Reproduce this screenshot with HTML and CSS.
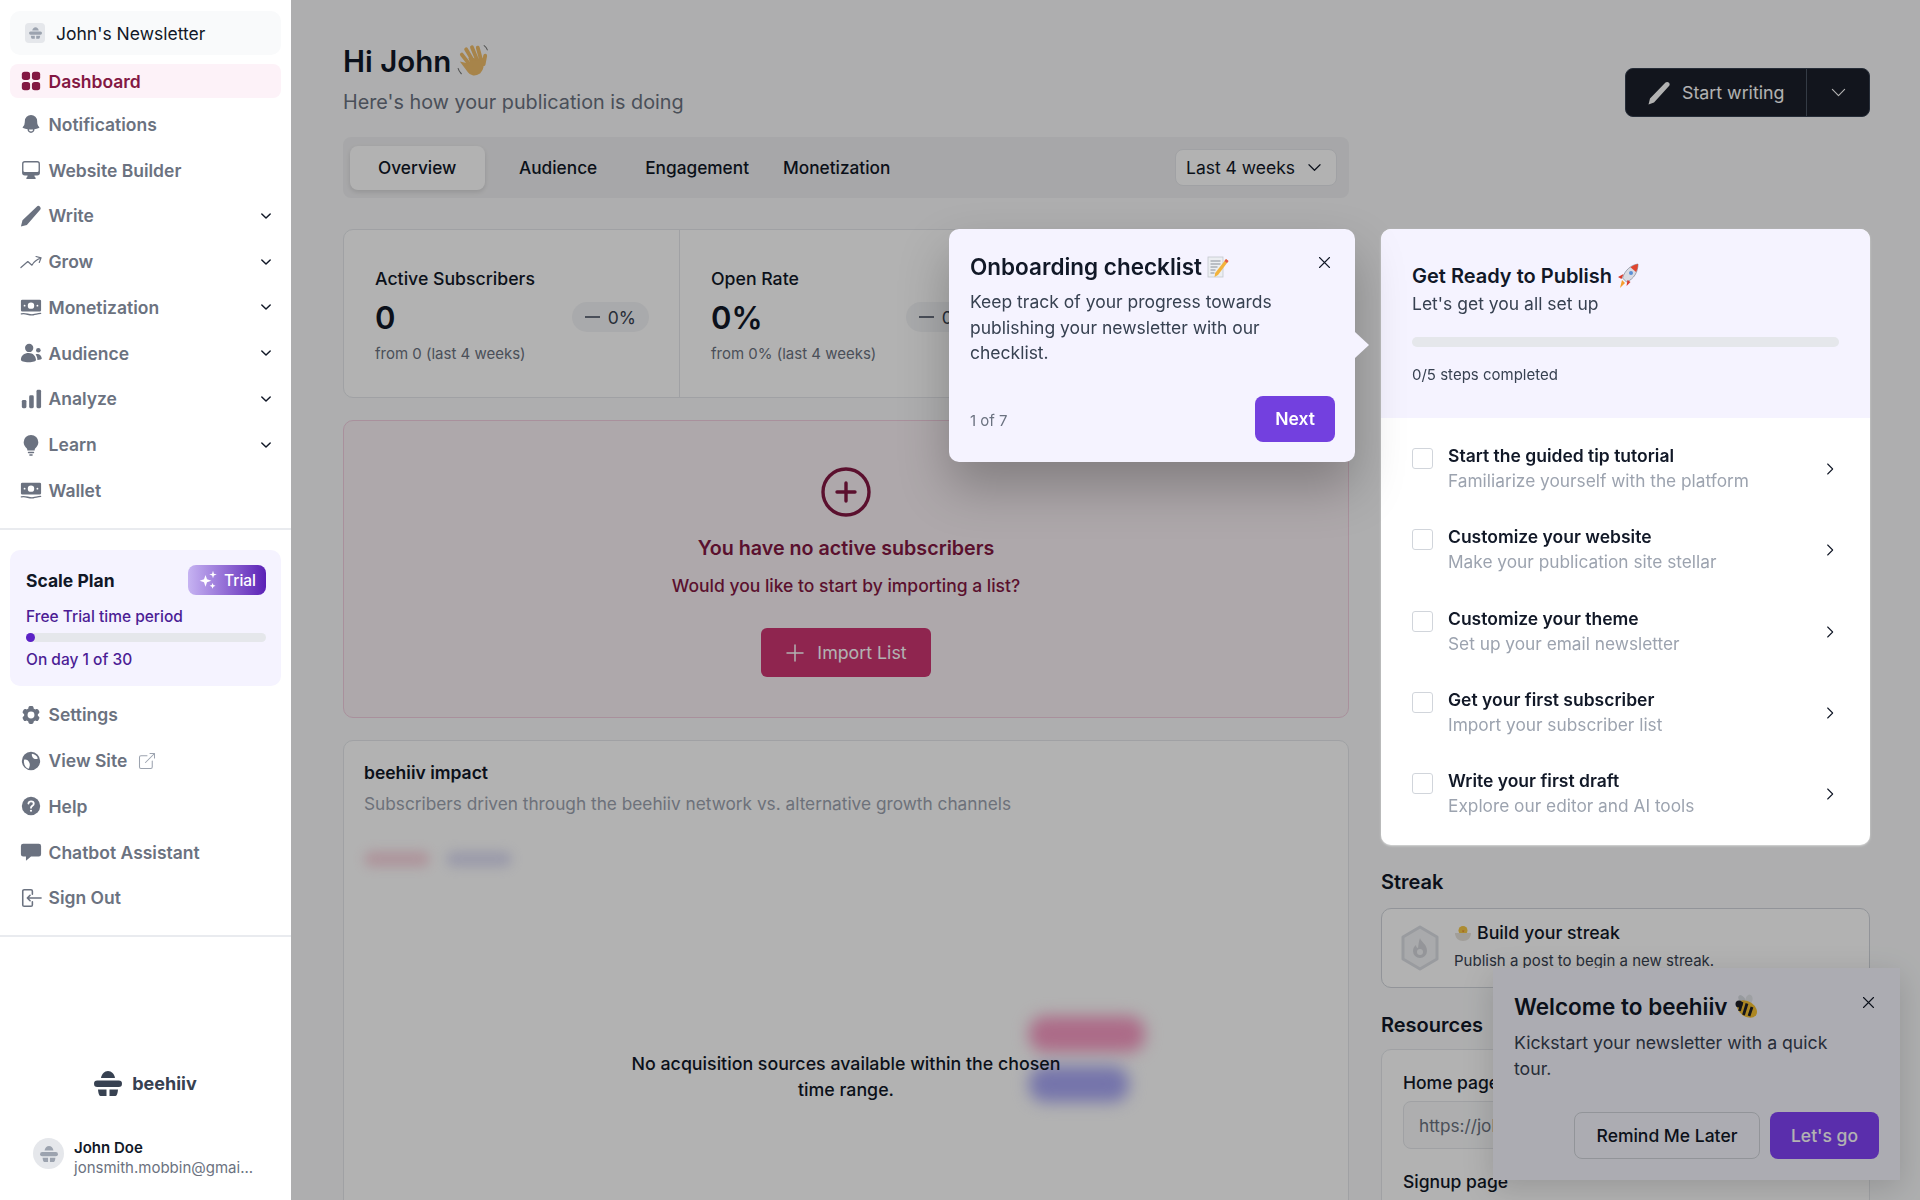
FILE: index.html
```html
<!DOCTYPE html>
<html lang="en">
<head>
    <meta charset="UTF-8">
    <meta name="viewport" content="width=device-width, initial-scale=1.0">
    <title>beehiiv Dashboard</title>
    <link rel="stylesheet" href="styles.css">
</head>
<body>
    <svg class="sprite" xmlns="http://www.w3.org/2000/svg">
        <symbol id="chevron" viewBox="0 0 24 24"><path d="M5 8.5l7 7 7-7" fill="none" stroke="currentColor" stroke-linecap="round" stroke-linejoin="round"/></symbol>
        <symbol id="chevron-right" viewBox="0 0 24 24"><path d="M8.5 4.5L16 12l-7.5 7.5" fill="none" stroke="currentColor" stroke-width="1.6" stroke-linecap="round" stroke-linejoin="round"/></symbol>
        <symbol id="close" viewBox="0 0 24 24"><path d="M4 4l16 16M20 4L4 20" fill="none" stroke="currentColor" stroke-width="1.7" stroke-linecap="round"/></symbol>
        <symbol id="money" viewBox="0 0 24 24"><path fill-rule="evenodd" d="M2.5 4h19A1.5 1.5 0 0123 5.500v10a1.500 1.500 0 01-1.500 1.500h-19A1.500 1.500 0 011 15.500v-10A1.500 1.500 0 012.500 4zM12 7a3.500 3.500 0 100 7 3.500 3.500 0 000-7zM5 9.500a1 1 0 100 2 1 1 0 000-2zm14 0a1 1 0 100 2 1 1 0 000-2z"/><path d="M1.500 19.500c5-1.300 8 1.800 13 1 3-.5 5-1.200 8-1.500" fill="none" stroke="currentColor" stroke-width="1.500" stroke-linecap="round"/></symbol>
        <symbol id="logo" viewBox="0 0 28 25"><path d="M7 7c.6-4 3.500-7 7-7s6.400 3 7 7z"/><rect y="9.500" width="28" height="6.500" rx="3.250"/><path d="M4 18.500h8.500V25H6.500C5 25 4.300 22 4 18.500zM15.500 18.500H24C23.700 22 23 25 21.500 25h-6z"/></symbol>
    </svg>

    <aside class="sidebar">
        <div class="sidebar-top">
            <div class="publication">
                <span class="publication-icon"><svg width="13" height="12"><use href="#logo"/></svg></span>
                John's Newsletter
            </div>
            <a class="nav-item nav-active">
                <svg class="nav-icon" viewBox="0 0 24 24" fill="currentColor"><rect x="2" y="2" width="9" height="9" rx="3"/><rect x="13" y="2" width="9" height="9" rx="3"/><rect x="2" y="13" width="9" height="9" rx="3"/><rect x="13" y="13" width="9" height="9" rx="3"/></svg>
                Dashboard
            </a>
            <a class="nav-item">
                <svg class="nav-icon" viewBox="0 0 24 24" fill="currentColor"><path fill-rule="evenodd" clip-rule="evenodd" d="M5.250 9a6.750 6.750 0 0113.500 0v.75c0 2.123.8 4.057 2.118 5.520a.75.75 0 01-.297 1.206c-1.544.57-3.160.99-4.831 1.243a3.750 3.750 0 11-7.480 0 24.585 24.585 0 01-4.831-1.244.75.75 0 01-.298-1.205A8.217 8.217 0 005.250 9.750V9zm4.502 8.900a2.250 2.250 0 104.496 0 25.057 25.057 0 01-4.496 0z"/></svg>
                Notifications
            </a>
            <a class="nav-item">
                <svg class="nav-icon" viewBox="0 0 24 24" fill="currentColor"><path fill-rule="evenodd" clip-rule="evenodd" d="M2.250 5.250a3 3 0 013-3h13.500a3 3 0 013 3V15a3 3 0 01-3 3h-3v.257c0 .597.237 1.170.659 1.591l.621.622a.75.75 0 01-.53 1.280h-9a.75.75 0 01-.53-1.280l.621-.622a2.250 2.250 0 00.659-1.590V18h-3a3 3 0 01-3-3V5.250zm1.500 0v7.500a1.500 1.500 0 001.500 1.500h13.500a1.500 1.500 0 001.500-1.500v-7.500a1.500 1.500 0 00-1.500-1.500H5.250a1.500 1.500 0 00-1.500 1.500z"/></svg>
                Website Builder
            </a>
            <a class="nav-item">
                <svg class="nav-icon" viewBox="0 0 24 24" fill="currentColor"><path d="M1 23.500l1.700-6.800L18.500 1.500c1-1 2.500-.6 3.300.3.8.9 1.200 2.400.2 3.400L7.500 21.700z"/></svg>
                Write
                <svg class="nav-chevron" stroke-width="2.4"><use href="#chevron"/></svg>
            </a>
            <a class="nav-item">
                <svg class="nav-icon" viewBox="0 0 24 24" fill="none" stroke="currentColor" stroke-width="1.300" stroke-linecap="round" stroke-linejoin="round"><path d="M1 18l7.500-6.500 4.500 4c1.800-3.500 5-6.200 10-8m0 0l-5.500-1.500M23 7.500l-2 5"/></svg>
                Grow
                <svg class="nav-chevron" stroke-width="2.4"><use href="#chevron"/></svg>
            </a>
            <a class="nav-item">
                <svg class="nav-icon" fill="currentColor"><use href="#money"/></svg>
                Monetization
                <svg class="nav-chevron" stroke-width="2.4"><use href="#chevron"/></svg>
            </a>
            <a class="nav-item">
                <svg class="nav-icon" viewBox="0 0 24 24" fill="currentColor"><circle cx="10" cy="6.500" r="4.500"/><circle cx="20" cy="9" r="2.500"/><path d="M1 19.500c0-5 3.800-7.500 8.500-7.500s7.500 3 8 7.500c0 1-3 2.500-8 2.500s-8.500-1.500-8.500-2.500zM19 19.500c0-2.500-.8-4.500-2-6 3-1.500 6.500.5 6.800 4.500 0 .8-2 1.500-4.800 1.500z"/></svg>
                Audience
                <svg class="nav-chevron" stroke-width="2.4"><use href="#chevron"/></svg>
            </a>
            <a class="nav-item">
                <svg class="nav-icon" viewBox="0 0 24 24" fill="currentColor"><rect x="2" y="13" width="5" height="9" rx="1.500"/><rect x="10" y="8" width="5" height="14" rx="1.500"/><rect x="18" y="2" width="5" height="20" rx="1.500"/></svg>
                Analyze
                <svg class="nav-chevron" stroke-width="2.4"><use href="#chevron"/></svg>
            </a>
            <a class="nav-item">
                <svg class="nav-icon" viewBox="0 0 24 24" fill="currentColor"><path d="M12 1a8 8 0 00-8 8c0 3 1.700 5 3.500 6.800.5.700.5 1.500.5 2.200h8c0-.7 0-1.500.5-2.200C18.300 14 20 12 20 9a8 8 0 00-8-8z"/><rect x="8.500" y="19.300" width="7" height="1.700" rx=".8"/><rect x="10" y="22" width="4" height="1.700" rx=".8"/></svg>
                Learn
                <svg class="nav-chevron" stroke-width="2.4"><use href="#chevron"/></svg>
            </a>
            <a class="nav-item">
                <svg class="nav-icon" fill="currentColor"><use href="#money"/></svg>
                Wallet
            </a>
        </div>

        <div class="plan-card">
            <div class="plan-head">
                <span class="plan-name">Scale Plan</span>
                <span class="trial-badge">
                    <svg width="20" height="20" viewBox="0 0 24 24" fill="currentColor"><path d="M9 6l1.800 5.200L16 13l-5.200 1.800L9 20l-1.800-5.200L2 13l5.200-1.800zM18 1l1.100 3.400L22.500 5.500l-3.400 1.100L18 10l-1.100-3.400L13.500 5.500l3.400-1.100zM17.500 15.500l1 2.500 2.500 1-2.500 1-1 2.500-1-2.500-2.500-1 2.500-1z"/></svg>
                    Trial
                </span>
            </div>
            <div class="plan-text">Free Trial time period</div>
            <div class="plan-track"><div class="plan-fill"></div></div>
            <div class="plan-text">On day 1 of 30</div>
        </div>

        <div class="sidebar-links">
            <a class="nav-item">
                <svg class="nav-icon" viewBox="0 0 24 24" fill="currentColor"><path fill-rule="evenodd" clip-rule="evenodd" d="M11.078 2.250c-.917 0-1.699.663-1.850 1.567L9.050 4.889c-.02.12-.115.26-.297.348a7.493 7.493 0 00-.986.57c-.166.115-.334.126-.45.083L6.300 5.508a1.875 1.875 0 00-2.282.819l-.922 1.597a1.875 1.875 0 00.432 2.385l.84.692c.095.078.17.229.154.43a7.598 7.598 0 000 1.139c.015.2-.059.352-.153.43l-.841.692a1.875 1.875 0 00-.432 2.385l.922 1.597a1.875 1.875 0 002.282.818l1.019-.382c.115-.043.283-.031.45.082.312.214.641.405.985.57.182.088.277.228.297.35l.178 1.071c.151.904.933 1.567 1.850 1.567h1.844c.916 0 1.699-.663 1.850-1.567l.178-1.072c.02-.12.114-.26.297-.349.344-.165.673-.356.985-.57.167-.114.335-.125.45-.082l1.020.382a1.875 1.875 0 002.280-.819l.923-1.597a1.875 1.875 0 00-.432-2.385l-.84-.692c-.095-.078-.17-.229-.154-.43a7.614 7.614 0 000-1.139c-.016-.2.059-.352.153-.43l.84-.692c.708-.582.891-1.590.433-2.385l-.922-1.597a1.875 1.875 0 00-2.282-.818l-1.020.382c-.114.043-.282.031-.449-.083a7.490 7.490 0 00-.985-.57c-.183-.087-.277-.227-.297-.348l-.179-1.072a1.875 1.875 0 00-1.850-1.567h-1.843zM12 15.750a3.750 3.750 0 100-7.500 3.750 3.750 0 000 7.500z"/></svg>
                Settings
            </a>
            <a class="nav-item">
                <svg class="nav-icon" viewBox="0 0 24 24" fill="currentColor"><path fill-rule="evenodd" clip-rule="evenodd" d="M12 2a10 10 0 100 20 10 10 0 000-20zm-7.500 8.500c2.500-.5 4 .5 5 2 1 1.500 1.500 3 1 5-.3 1.200-.5 2-1 3C6 19.500 3.500 15.500 4.500 10.500zM13 4.200c3 .3 5.500 2.300 6.500 5-1.500 1-3 1-4.500 0-1.500-1-2.500-3-2-5z"/></svg>
                View Site
                <svg class="external-icon" viewBox="0 0 24 24" fill="none" stroke="currentColor" stroke-width="1.400" stroke-linecap="round" stroke-linejoin="round"><path d="M12 5H4a2 2 0 00-2 2v13a2 2 0 002 2h13a2 2 0 002-2v-8M10 14L22 2m0 0h-6m6 0v6"/></svg>
            </a>
            <a class="nav-item">
                <svg class="nav-icon" viewBox="0 0 24 24"><circle cx="12" cy="12" r="10" fill="currentColor"/><path d="M9.200 9.300c.3-1.500 1.400-2.300 2.900-2.300 1.600 0 2.900 1 2.900 2.500 0 2.300-3 2.300-3 4.500" fill="none" stroke="#fff" stroke-width="2" stroke-linecap="round"/><circle cx="12" cy="17.200" r="1.200" fill="#fff"/></svg>
                Help
            </a>
            <a class="nav-item">
                <svg class="nav-icon" viewBox="0 0 24 24" fill="currentColor"><path d="M3.500 3h17A2.500 2.500 0 0123 5.500v9a2.500 2.500 0 01-2.500 2.500H12l-5.500 4.500V17h-3A2.500 2.500 0 011 14.500v-9A2.500 2.500 0 013.500 3z"/></svg>
                Chatbot Assistant
            </a>
            <a class="nav-item">
                <svg class="nav-icon" viewBox="0 0 24 24" fill="none" stroke="currentColor" stroke-width="1.700" stroke-linecap="round" stroke-linejoin="round"><path d="M13.500 8V4.500a1.500 1.500 0 00-1.500-1.500H4.500A1.500 1.500 0 003 4.500v15A1.500 1.500 0 004.500 21H12a1.500 1.500 0 001.500-1.500V16M11 15l-3-3m0 0l3-3m-3 3h15"/></svg>
                Sign Out
            </a>
        </div>

        <div class="sidebar-footer">
            <div class="brand">
                <svg width="28" height="25" fill="#374151"><use href="#logo"/></svg>
                beehiiv
            </div>
            <div class="account">
                <span class="account-avatar"><svg width="18" height="16"><use href="#logo"/></svg></span>
                <div class="account-text">
                    <div class="account-name">John Doe</div>
                    <div class="account-email">jonsmith.mobbin@gmai...</div>
                </div>
            </div>
        </div>
    </aside>

    <main class="main">
        <div class="page-head">
            <div>
                <h1>Hi John
                    <svg class="emoji-hand" width="34" height="34" viewBox="0 0 32 32" fill="none" stroke="#f0bd6a" stroke-width="3.6" stroke-linecap="round"><path d="M9.500 5l6 10M15 3l4.500 11M20.500 3.500l3 11M5.500 10l7 9M27.500 11l-1.500 8" /><path d="M13 14l11 1c2 5 1 9-2 12-4 2.500-8 2-10-1l-6-8 9 2z" fill="#f0bd6a" stroke-width="2"/><path d="M2 23c.5 2 1.500 3.500 3 5M26.500 1.500c1.500 1 2.500 2.500 3 4" stroke="#777" stroke-width="1"/></svg>
                </h1>
                <p class="page-sub">Here's how your publication is doing</p>
            </div>
            <div class="write-btn">
                <span class="write-main">
                    <svg width="24" height="24" viewBox="0 0 24 24" fill="currentColor"><path d="M1.500 23.500l1.500-6L18.500 1.500c1-1 2.800-.7 3.500.2.800.9 1 2.400 0 3.400L7 21.500z"/></svg>
                    Start writing
                </span>
                <span class="write-caret"><svg width="21" height="21" stroke-width="1.300"><use href="#chevron"/></svg></span>
            </div>
        </div>

        <div class="tabs">
            <span class="tab tab-active">Overview</span>
            <span class="tab">Audience</span>
            <span class="tab tab-compact">Engagement</span>
            <span class="tab tab-compact">Monetization</span>
            <span class="range-select">Last 4 weeks <svg width="19" height="19" stroke-width="1.500"><use href="#chevron"/></svg></span>
        </div>

        <div class="columns">
            <div class="col-left">
                <div class="stats">
                    <div class="stat">
                        <div class="stat-label">Active Subscribers</div>
                        <div class="stat-row"><span class="stat-value">0</span><span class="stat-badge"><i></i>0%</span></div>
                        <div class="stat-note">from 0 (last 4 weeks)</div>
                    </div>
                    <div class="stat">
                        <div class="stat-label">Open Rate</div>
                        <div class="stat-row"><span class="stat-value">0%</span><span class="stat-badge"><i></i>0%</span></div>
                        <div class="stat-note">from 0% (last 4 weeks)</div>
                    </div>
                    <div class="stat"></div>
                </div>

                <div class="empty-card">
                    <svg width="50" height="50" viewBox="0 0 50 50" fill="none" stroke="currentColor" stroke-linecap="round"><circle cx="25" cy="25" r="23" stroke-width="3.400"/><path d="M25 16v18M16 25h18" stroke-width="3.400"/></svg>
                    <div class="empty-title">You have no active subscribers</div>
                    <div class="empty-sub">Would you like to start by importing a list?</div>
                    <span class="import-btn">
                        <svg width="20" height="20" viewBox="0 0 20 20" fill="none" stroke="currentColor" stroke-width="1.500" stroke-linecap="round"><path d="M10 2v16M2 10h16"/></svg>
                        Import List
                    </span>
                </div>

                <div class="impact-card">
                    <div class="impact-title">beehiiv impact</div>
                    <div class="impact-sub">Subscribers driven through the beehiiv network vs. alternative growth channels</div>
                    <div class="impact-legend"><span class="legend-pink"></span><span class="legend-blue"></span></div>
                    <div class="impact-chart">
                        <div class="chart-bars"><span class="bar-pink"></span><span class="bar-blue"></span></div>
                        <p class="chart-empty">No acquisition sources available within the chosen time range.</p>
                    </div>
                </div>
            </div>

            <div class="col-right">
                <div class="checklist">
                    <div class="checklist-head">
                        <div class="checklist-title">Get Ready to Publish
                            <svg width="24" height="27" viewBox="0 0 24 27"><path d="M22 1C15 2 9 7 6.500 15l4 4C18 16 22 9 22 1z" fill="#d9dbe3" stroke="#6b7280" stroke-width=".6"/><path d="M22 1c-3 .5-5.500 1.700-7.500 3.200L20 9c1.200-2.200 2-5 2-8z" fill="#e0452f"/><path d="M7.500 11L2 14l3.500 2zM11.500 17l-1 6 4-4z" fill="#d93b2b"/><circle cx="15" cy="10" r="2" fill="#5b8fd6"/><path d="M6 17l3 3-5 5z" fill="#f59e2e"/></svg>
                        </div>
                        <div class="checklist-sub">Let's get you all set up</div>
                        <div class="checklist-track"></div>
                        <div class="checklist-steps">0/5 steps completed</div>
                    </div>
                    <div class="task"><span class="task-box"></span><div class="task-text"><div class="task-title">Start the guided tip tutorial</div><div class="task-sub">Familiarize yourself with the platform</div></div><svg class="task-chevron"><use href="#chevron-right"/></svg></div>
                    <div class="task"><span class="task-box"></span><div class="task-text"><div class="task-title">Customize your website</div><div class="task-sub">Make your publication site stellar</div></div><svg class="task-chevron"><use href="#chevron-right"/></svg></div>
                    <div class="task"><span class="task-box"></span><div class="task-text"><div class="task-title">Customize your theme</div><div class="task-sub">Set up your email newsletter</div></div><svg class="task-chevron"><use href="#chevron-right"/></svg></div>
                    <div class="task"><span class="task-box"></span><div class="task-text"><div class="task-title">Get your first subscriber</div><div class="task-sub">Import your subscriber list</div></div><svg class="task-chevron"><use href="#chevron-right"/></svg></div>
                    <div class="task"><span class="task-box"></span><div class="task-text"><div class="task-title">Write your first draft</div><div class="task-sub">Explore our editor and AI tools</div></div><svg class="task-chevron"><use href="#chevron-right"/></svg></div>
                </div>

                <h2 class="side-title">Streak</h2>
                <div class="streak-card">
                    <svg width="40" height="46" viewBox="0 0 40 46"><path d="M20 2l17 10v22L20 44 3 34V12z" fill="#f3f4f6" stroke="#dcdfe4" stroke-width="3" stroke-linejoin="round"/><path d="M20 13c1 4 7 6 7 13a7 7 0 01-14 0c0-3 1.500-5 3-6 0 2 1 3 2 3 .5-3 .5-6 2-10z" fill="#d4d6db"/><circle cx="20" cy="27" r="3" fill="#f3f4f6"/></svg>
                    <div class="streak-body">
                        <div class="streak-title">
                            <svg width="18" height="18" viewBox="0 0 18 18"><circle cx="9" cy="6.500" r="4.500" fill="#f7c948"/><path d="M8 6.500h2.500L9 8.500z" fill="#e8862e"/><path d="M1 9h16c0 5-3.500 8-8 8s-8-3-8-8z" fill="#e7e3dc"/></svg>
                            Build your streak
                        </div>
                        <div class="streak-sub">Publish a post to begin a new streak.</div>
                    </div>
                </div>

                <h2 class="side-title">Resources</h2>
                <div class="resources-card">
                    <div class="res-label">Home page</div>
                    <div class="res-input">https://john-s-newsletter.beehiiv.com</div>
                    <div class="res-label">Signup page</div>
                </div>
            </div>
        </div>

        <div class="welcome">
            <svg class="welcome-close" width="15" height="15"><use href="#close"/></svg>
            <div class="welcome-title">Welcome to beehiiv
                <svg width="26" height="26" viewBox="0 0 26 26"><ellipse cx="8" cy="5.500" rx="3" ry="5" fill="#d9dde3" transform="rotate(-35 8 5.500)"/><ellipse cx="15" cy="5.500" rx="3.500" ry="5" fill="#e3e6ea" transform="rotate(15 15 5.500)"/><ellipse cx="13" cy="15" rx="11" ry="7.500" fill="#f7c233" transform="rotate(35 13 15)"/><path d="M8 8l-2.500 9M13 9.500L9.500 21M18 13l-3 9" stroke="#1f2028" stroke-width="2.800"/><circle cx="5" cy="10" r="3.500" fill="#1f2028"/></svg>
            </div>
            <p class="welcome-text">Kickstart your newsletter with a quick tour.</p>
            <div class="welcome-actions">
                <span class="btn-later">Remind Me Later</span>
                <span class="btn-go">Let's go</span>
            </div>
        </div>

        <div class="overlay"></div>

        <div class="popover">
            <svg class="popover-close" width="15" height="15"><use href="#close"/></svg>
            <div class="popover-title">Onboarding checklist
                <svg width="22" height="24" viewBox="0 0 22 24"><rect x="1" y="2" width="15" height="20" fill="#eceef2" stroke="#c4c7cd" stroke-width=".8"/><path d="M3.500 6h10M3.500 9h10M3.500 12h7M3.500 15h5M3.500 18h4" stroke="#8a8f98" stroke-width="1"/><path d="M19 4l2.500 2L11 20l-3.500 2 .7-4z" fill="#f2b33d"/><path d="M19 4l2.500 2-1.500 2-2.500-2z" fill="#e2574c"/></svg>
            </div>
            <p class="popover-text">Keep track of your progress towards publishing your newsletter with our checklist.</p>
            <div class="popover-foot">
                <span class="popover-count">1 of 7</span>
                <span class="btn-next">Next</span>
            </div>
        </div>
    </main>
</body>
</html>
```

FILE: styles.css
```css
* {
    margin: 0;
    padding: 0;
    box-sizing: border-box;
}

body {
    display: flex;
    width: 1920px;
    height: 1200px;
    overflow: hidden;
    background: #f9fafb;
    font-family: 'Inter', 'Liberation Sans', sans-serif;
    font-size: 17.5px;
    color: #111827;
}

.sprite {
    display: none;
}

/* Sidebar */
.sidebar {
    width: 291px;
    flex: none;
    height: 1200px;
    display: flex;
    flex-direction: column;
    background: #ffffff;
}

.sidebar-top {
    padding: 11px 10px 16px;
    border-bottom: 2px solid #e9ebef;
    height: 530px;
}

.publication {
    display: flex;
    align-items: center;
    gap: 11px;
    height: 44px;
    padding-left: 15px;
    margin-bottom: 9px;
    background: #f9fafb;
    border-radius: 10px;
    color: #111827;
}

.publication-icon {
    width: 20px;
    height: 20px;
    border-radius: 4px;
    background: #e5e7eb;
    display: flex;
    align-items: center;
    justify-content: center;
    fill: #9ca3af;
}

.nav-item {
    display: flex;
    align-items: center;
    gap: 6.5px;
    height: 45.75px;
    padding: 0 6px 0 10px;
    color: #6b7280;
    font-weight: 600;
}

.nav-active {
    height: 34px;
    margin-bottom: 3.5px;
    background: #fdf2f8;
    border-radius: 8px;
    color: #831843;
}

.nav-icon {
    width: 22px;
    height: 22px;
    flex: none;
}

.nav-chevron {
    width: 18px;
    height: 18px;
    margin-left: auto;
    color: #111827;
    transform: scale(.8);
}

.external-icon {
    width: 18px;
    height: 18px;
    margin-left: 4px;
    color: #9ca3af;
}

.plan-card {
    margin: 20px 10px 6px;
    height: 136px;
    padding: 15px 15px 0 16px;
    background: #f5f3ff;
    border-radius: 10px;
}

.plan-head {
    display: flex;
    justify-content: space-between;
    align-items: center;
    height: 30px;
    margin-bottom: 12px;
}

.plan-name {
    font-weight: 700;
    font-size: 17.5px;
}

.trial-badge {
    display: flex;
    align-items: center;
    gap: 6px;
    height: 30px;
    padding: 0 10px;
    border-radius: 8px;
    background: linear-gradient(90deg, #c6b3f2, #5b21b6);
    color: #ffffff;
    font-size: 15.5px;
    font-weight: 500;
}

.plan-text {
    font-size: 15.5px;
    font-weight: 500;
    line-height: 20px;
    color: #4c1d95;
}

.plan-track {
    height: 9px;
    margin: 6px 0 8px;
    background: #e5e7eb;
    border-radius: 5px;
}

.plan-fill {
    width: 9px;
    height: 9px;
    border-radius: 50%;
    background: #5b21c6;
}

.sidebar-links {
    padding: 0 10px 14px;
    border-bottom: 2px solid #e9ebef;
}

.sidebar-footer {
    margin-top: auto;
    padding-bottom: 22px;
    display: flex;
    flex-direction: column;
}

.brand {
    display: flex;
    align-items: center;
    justify-content: center;
    gap: 10px;
    margin-bottom: 42px;
    font-weight: 700;
    font-size: 18px;
    color: #374151;
}

.account {
    display: flex;
    align-items: flex-start;
    gap: 10px;
    padding-left: 33px;
}

.account-avatar {
    width: 31px;
    height: 31px;
    border-radius: 50%;
    background: #e5e7eb;
    display: flex;
    align-items: center;
    justify-content: center;
    fill: #9ca3af;
}

.account-name {
    font-size: 15px;
    font-weight: 600;
    line-height: 20px;
}

.account-email {
    font-size: 15px;
    line-height: 20px;
    color: #6b7280;
    white-space: nowrap;
}

/* Main column */
.main {
    position: relative;
    flex: 1;
    height: 1200px;
    padding: 42px 50px 0 52px;
    overflow: hidden;
}

.page-head {
    display: flex;
    justify-content: space-between;
    align-items: flex-start;
    height: 95px;
}

h1 {
    display: flex;
    align-items: center;
    gap: 5px;
    font-size: 29.5px;
    line-height: 38px;
    font-weight: 600;
}

.page-sub {
    margin-top: 8px;
    font-size: 19.8px;
    line-height: 28px;
    color: #6b7280;
}

.write-btn {
    display: flex;
    margin-top: 26px;
    height: 49px;
    width: 245px;
    background: #1b1f2a;
    border: 1px solid #374151;
    border-radius: 8px;
    color: #ffffff;
}

.write-main {
    display: flex;
    align-items: center;
    gap: 11px;
    width: 181px;
    padding-left: 21px;
    border-right: 1px solid #4b5563;
    font-size: 17.8px;
    font-weight: 400;
}

.write-caret {
    flex: 1;
    display: flex;
    align-items: center;
    justify-content: center;
}

.tabs {
    display: flex;
    align-items: center;
    gap: 6px;
    width: 1006px;
    height: 61px;
    padding: 0 12px 0 7px;
    background: #f0f0f2;
    border-radius: 8px;
    font-size: 17.25px;
    font-weight: 500;
}

.tab {
    height: 44px;
    display: flex;
    align-items: center;
    padding: 0 28px;
    border-radius: 8px;
}

.tab-compact {
    padding: 0 14px;
}

.tab-active {
    min-width: 135px;
    background: #ffffff;
    box-shadow: 0 2px 5px rgba(0, 0, 0, 0.12);
}

.range-select {
    margin-left: auto;
    display: flex;
    align-items: center;
    gap: 10px;
    width: 162px;
    height: 37px;
    padding-left: 10px;
    background: #ffffff;
    border: 1px solid #e5e7eb;
    border-radius: 8px;
    font-size: 17.5px;
    font-weight: 400;
}

.columns {
    display: grid;
    grid-template-columns: 1006px 489px;
    gap: 32px;
    margin-top: 31px;
}

.col-left {
    display: flex;
    flex-direction: column;
    gap: 22px;
}

.stats {
    display: grid;
    grid-template-columns: 336px 1fr 1fr;
    height: 169px;
    background: #ffffff;
    border: 1px solid #e5e7eb;
    border-radius: 10px;
}

.stat {
    padding: 37px 30px 0 31px;
    border-right: 1px solid #e5e7eb;
}

.stat:last-child {
    border-right: none;
}

.stat-label {
    font-weight: 500;
    font-size: 17.7px;
    line-height: 24px;
}

.stat-row {
    display: flex;
    justify-content: space-between;
    align-items: center;
    height: 42px;
    margin-top: 5px;
}

.stat-value {
    font-size: 31px;
    font-weight: 600;
}

.stat-badge {
    display: flex;
    align-items: center;
    gap: 8px;
    height: 30px;
    padding: 0 13px;
    border-radius: 15px;
    background: #f3f4f6;
    color: #374151;
}

.stat-badge i {
    width: 15px;
    height: 2px;
    background: #6b7280;
}

.stat-note {
    margin-top: 6px;
    font-size: 15px;
    line-height: 20px;
    color: #6b7280;
}

.empty-card {
    height: 298px;
    display: flex;
    flex-direction: column;
    align-items: center;
    padding-top: 46px;
    background: #f9f1f5;
    border: 1px solid #f3cfe0;
    border-radius: 10px;
    color: #831843;
}

.empty-title {
    margin-top: 17px;
    font-size: 19.7px;
    line-height: 28px;
    font-weight: 600;
}

.empty-sub {
    margin-top: 11px;
    font-weight: 500;
    line-height: 26px;
}

.import-btn {
    display: flex;
    align-items: center;
    gap: 12px;
    margin-top: 29px;
    height: 49px;
    padding: 0 24px;
    background: #cd3672;
    border-radius: 6px;
    color: #ffffff;
    font-size: 17.8px;
    font-weight: 400;
}

.impact-card {
    height: 600px;
    padding: 20px 20px;
    background: #ffffff;
    border: 1px solid #e5e7eb;
    border-radius: 10px;
}

.impact-title {
    font-weight: 600;
    line-height: 24px;
}

.impact-sub {
    margin-top: 6px;
    font-size: 17.25px;
    line-height: 26px;
    color: #9ca3af;
}

.impact-legend {
    display: flex;
    gap: 16px;
    margin-top: 34px;
    opacity: .45;
}

.legend-pink,
.legend-blue {
    width: 66px;
    height: 16px;
    border-radius: 8px;
    filter: blur(6px);
}

.legend-pink {
    background: #f3a3b8;
}

.legend-blue {
    background: #b6b6e6;
}

.impact-chart {
    position: relative;
    margin-top: 184px;
    text-align: center;
}

.chart-empty {
    position: relative;
    width: 450px;
    margin: 0 auto;
    font-size: 17.8px;
    font-weight: 500;
    line-height: 26px;
}

/* blurred placeholder bars behind the empty message */
.chart-bars {
    position: absolute;
    left: 665px;
    top: -35px;
}

.bar-pink,
.bar-blue {
    display: block;
    height: 36px;
    border-radius: 16px;
    filter: blur(8px);
}

.bar-pink {
    width: 116px;
    background: #f79ac3;
}

.bar-blue {
    width: 100px;
    margin-top: 14px;
    background: #a8a7f5;
}

.col-right {
    display: flex;
    flex-direction: column;
}

.checklist {
    position: relative;
    z-index: 20;
    height: 616px;
    background: #ffffff;
    border-radius: 10px;
    box-shadow: 0 1px 2px rgba(255, 255, 255, 0.5);
    overflow: hidden;
}

.checklist-head {
    height: 189px;
    padding: 34px 31px 0;
    background: #f5f3ff;
}

.checklist-title {
    display: flex;
    align-items: center;
    gap: 4px;
    height: 26px;
    font-size: 20px;
    font-weight: 600;
}

.checklist-sub {
    margin-top: 2px;
    line-height: 25px;
    color: #374151;
}

.checklist-track {
    height: 10px;
    margin-top: 21px;
    background: #e5e7eb;
    border-radius: 5px;
}

.checklist-steps {
    margin-top: 18px;
    font-size: 15px;
    line-height: 20px;
    color: #374151;
}

.task {
    display: flex;
    align-items: center;
    height: 81.3px;
    padding: 0 31px;
    position: relative;
    top: 25px;
}

.task-box {
    align-self: flex-start;
    width: 21px;
    height: 21px;
    margin: 5px 15px 0 0;
    background: #ffffff;
    border: 1px solid #d1d5db;
    border-radius: 3px;
}

.task-text {
    flex: 1;
    align-self: flex-start;
}

.task-title {
    font-size: 17.5px;
    font-weight: 600;
    line-height: 25px;
}

.task-sub {
    font-size: 17.3px;
    line-height: 26px;
    color: #9ca3af;
}

.task-chevron {
    width: 16px;
    height: 16px;
    margin: -29px 1px 0 0;
    color: #111827;
}

.side-title {
    margin-top: 25px;
    font-size: 20px;
    line-height: 25px;
    font-weight: 600;
}

.streak-card {
    display: flex;
    align-items: center;
    gap: 14px;
    height: 80px;
    margin-top: 13px;
    padding-left: 18px;
    background: #ffffff;
    border: 1px solid #d1d5db;
    border-radius: 10px;
}

.streak-body {
    margin-top: -4px;
}

.streak-title {
    display: flex;
    align-items: center;
    gap: 5px;
    font-size: 17.8px;
    font-weight: 500;
    line-height: 24px;
}

.streak-sub {
    margin-top: 6px;
    font-size: 15px;
    line-height: 20px;
    color: #374151;
}

.resources-card {
    margin-top: 11px;
    height: 300px;
    padding: 21px 21px;
    background: #ffffff;
    border: 1px solid #e5e7eb;
    border-radius: 10px;
}

.res-label {
    font-weight: 500;
    line-height: 24px;
}

.res-input {
    display: flex;
    align-items: center;
    height: 48px;
    margin: 6px 0 21px;
    padding-left: 15px;
    border: 1px solid #e5e7eb;
    border-radius: 8px;
    background: #f9fafb;
    color: #6b7280;
    font-size: 17.2px;
}

/* Dim layer and what sits around it */
.overlay {
    position: absolute;
    inset: 0;
    z-index: 10;
    background: rgba(0, 0, 0, 0.3);
}

.welcome {
    position: absolute;
    right: 20px;
    bottom: 20px;
    z-index: 5;
    width: 407px;
    height: 212px;
    padding: 25px 21px 0;
    background: #f7f7ff;
    box-shadow: 0 8px 30px rgba(0, 0, 0, 0.15);
}

.welcome-close {
    position: absolute;
    top: 27px;
    right: 24px;
    color: #111827;
}

.welcome-title {
    display: flex;
    align-items: center;
    gap: 6px;
    font-size: 22.5px;
    font-weight: 600;
    line-height: 28px;
}

.welcome-text {
    margin-top: 9px;
    padding-right: 40px;
    font-size: 17.7px;
    line-height: 25.5px;
    color: #374151;
}

.welcome-actions {
    display: flex;
    justify-content: flex-end;
    gap: 10px;
    margin-top: 31px;
}

.btn-later,
.btn-go {
    display: flex;
    align-items: center;
    justify-content: center;
    height: 47px;
    border-radius: 8px;
    font-weight: 500;
}

.btn-later {
    width: 186px;
    border: 1px solid #d1d5db;
}

.btn-go {
    width: 109px;
    background: #8243f7;
    color: #ffffff;
}

.popover {
    position: absolute;
    left: 658px;
    top: 229px;
    z-index: 30;
    width: 406px;
    height: 233px;
    padding: 24px 20px 0 21px;
    background: #f5f3ff;
    border-radius: 10px;
    box-shadow: 0 25px 50px rgba(0, 0, 0, 0.25);
}

/* arrow pointing at the checklist */
.popover::after {
    content: "";
    position: absolute;
    top: 103px;
    right: -14px;
    width: 14px;
    height: 26px;
    background: #f5f3ff;
    clip-path: polygon(0 0, 100% 50%, 0 100%);
}

.popover-close {
    position: absolute;
    top: 26px;
    right: 23px;
    color: #111827;
}

.popover-title {
    display: flex;
    align-items: center;
    gap: 5px;
    font-size: 22.5px;
    font-weight: 600;
    line-height: 28px;
}

.popover-text {
    margin-top: 8px;
    padding-right: 25px;
    line-height: 25.5px;
    color: #374151;
}

.popover-foot {
    display: flex;
    justify-content: space-between;
    align-items: flex-end;
    margin-top: 30px;
}

.popover-count {
    font-size: 15px;
    line-height: 20px;
    margin-bottom: 11px;
    color: #6b7280;
}

.btn-next {
    display: flex;
    align-items: center;
    justify-content: center;
    width: 80px;
    height: 46px;
    background: #7340df;
    border-radius: 8px;
    color: #ffffff;
    font-weight: 600;
}
```
